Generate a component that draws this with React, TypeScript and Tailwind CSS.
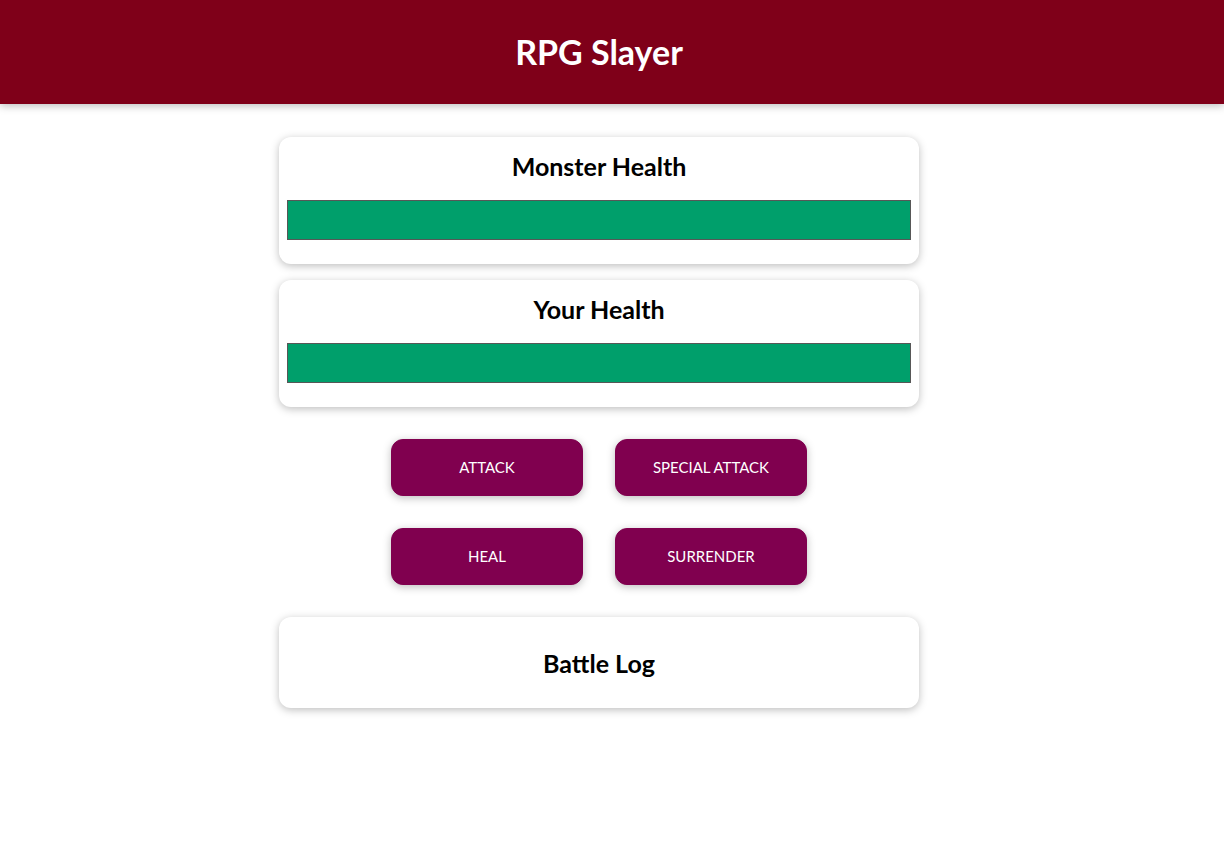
import React from "react";

const font = { fontFamily: "Lato, 'Noto Sans', sans-serif" };

function HealthCard({ title }: { title: string }) {
  return (
    <div className="w-[640px] rounded-[12px] bg-white px-2 pt-[13px] pb-6 text-center shadow-[0_2px_8px_rgba(0,0,0,0.26)]">
      <h2 className="m-0 text-[25px] font-bold leading-[32px] text-black">{title}</h2>
      <div className="mt-[18px] h-10 w-full border border-[#575757] bg-[#fde5e5]">
        <div className="h-full bg-[#009f6b]" style={{ width: "100%" }} />
      </div>
    </div>
  );
}

function Btn({ label }: { label: string }) {
  return (
    <button className="flex h-[57px] w-[192px] items-center justify-center rounded-[12px] border border-[#80004f] bg-[#80004f] pb-[1px] text-[15px] uppercase text-white shadow-[0_2px_8px_rgba(0,0,0,0.26)]">
      {label}
    </button>
  );
}

export default function App() {
  return (
    <div className="min-h-[854px] w-full bg-white" style={font}>
      <header className="relative z-10 flex h-[104px] w-full bg-[#7f0019] shadow-[0_2px_8px_rgba(0,0,0,0.26)]">
        <div className="flex w-[1198px] items-center justify-center">
          <h1 className="m-0 text-[34px] font-bold leading-none text-white">RPG Slayer</h1>
        </div>
      </header>
      <main className="flex w-[1198px] flex-col items-center pt-[33px]">
        <div className="flex flex-col gap-4">
          <HealthCard title="Monster Health" />
          <HealthCard title="Your Health" />
        </div>
        <div className="mt-8 grid grid-cols-2 gap-x-8 gap-y-8">
          <Btn label="Attack" />
          <Btn label="Special Attack" />
          <Btn label="Heal" />
          <Btn label="Surrender" />
        </div>
        <div className="mt-8 flex h-[91px] w-[640px] items-center justify-center rounded-[12px] bg-white text-center shadow-[0_2px_8px_rgba(0,0,0,0.26)]">
          <h2 className="m-0 text-[25px] font-bold leading-[32px] text-black">Battle Log</h2>
        </div>
      </main>
    </div>
  );
}
